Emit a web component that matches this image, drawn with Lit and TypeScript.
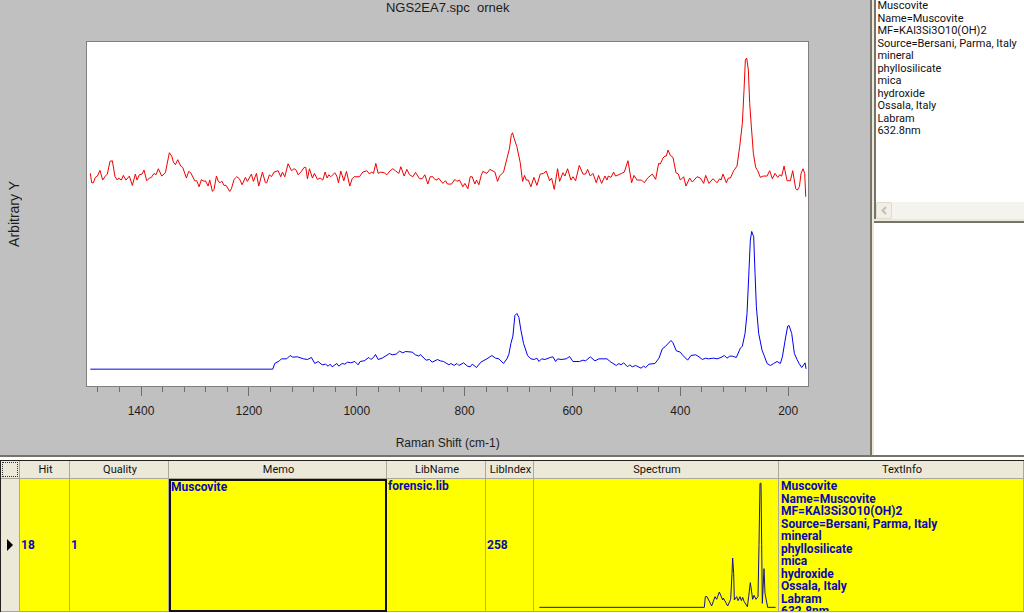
import { LitElement, html, svg, css } from "lit";
import { customElement } from "lit/decorators.js";

/** A run of samples: an origin in plot units, then x,y pairs in thirds of a unit. */
interface Run {
  origin: [number, number];
  samples: string;
}

const toPoints = (runs: Run[]): string =>
  runs
    .map(({ origin: [ox, oy], samples }) =>
      samples
        .trim()
        .split(/\s+/)
        .map((pair) => {
          const [x, y] = pair.split(",").map(Number);
          return `${(ox + x / 3).toFixed(2)},${(oy + y / 3).toFixed(2)}`;
        })
        .join(" ")
    )
    .join(" ");

const SAMPLE_TRACE: Run[] = [
  {
    origin: [80, 120],
    samples: `31,160 35,188 40,188 46,172 52,168 60,151 68,180 76,168 82,162 90,124 97,122 105,170 112,180 116,174
      124,180 130,166 138,180 148,168 157,196 166,162 171,180 178,164 186,162 192,150 200,182 208,174 214,172 222,160
      228,164 235,146 245,168 256,158 268,98 275,108 280,126 286,134 293,119 302,138 308,142 319,174 326,154 332,158
      344,182 350,182 357,200 364,179 372,184 376,182 384,198 389,180 397,214 402,208 409,168 415,184 420,188 425,183
      432,196 438,196 449,214 454,206 462,178 470,170 478,176 486,194 496,172 502,184 514,162 520,184 529,160 536,198
      547,156 556,188 560,188 568,164 574,170 582,156 594,152 602,170 607,156 614,170 624,131 634,152 642,146 648,150
      654,164 664,154 672,142 677,142 682,176 688,146 697,174 703,160 712,178`,
  },
  {
    origin: [320, 120],
    samples: `0,174 8,180 15,156 21,174 26,164 32,170 44,158 50,168 55,188 62,153 71,182 79,154 89,198 96,176 102,170
      118,170 128,156 140,152 148,162 154,156 160,160 167,130 174,160 182,156 192,158 200,164 210,152 218,146 226,152
      236,160 242,140 252,168 260,148 268,164 278,170 286,157 298,176 306,176 314,164 323,192 330,170 338,170 344,178
      350,180 355,174 368,190 376,182 382,192 394,192 404,178 410,184 418,180 428,200 434,190 443,206 450,170 456,170
      464,192 469,180 476,194 483,166 488,154 500,160 509,148 524,156 532,184 538,168 550,156 560,116 568,84 573,46
      577,38 582,56 590,80 600,128 607,184 613,166 618,180 624,180 632,200 641,172 650,196 660,162 670,160 678,153
      688,182 694,174 702,208 712,146 718,184`,
  },
  {
    origin: [560, 40],
    samples: `8,398 14,408 22,386 32,420 38,410 46,422 57,376 68,402 76,402 82,388 90,408 98,400 108,428 115,406
      124,430 134,408 140,420 144,408 152,412 160,396 166,408 184,400 192,396 203,362 214,428 221,406 230,420 244,420
      252,428 262,414 276,402 286,418 295,370 300,372 308,354 314,348 318,348 323,330 330,346 338,352 347,398 354,402
      360,420 370,410 377,438 388,414 396,426 410,410 420,414 430,430 436,406 446,430 458,416 470,428 478,416 482,420
      488,402 498,428 504,414 510,414 520,392 530,378 538,320 546,250 551,150 555,60 559,54 564,90 568,190 573,260
      579,340 586,382 592,392 600,412 608,408 620,408 628,392 636,416 644,400 652,412 658,404 664,408 671,378 680,422
      690,422 697,392 706,446 711,450 717,440 722,400 728,386 733,400 736,470`,
  },
];

const LIBRARY_TRACE: Run[] = [
  { origin: [0, 300], samples: "271,207 818,207" },
  {
    origin: [260, 300],
    samples: `44,190 58,182 64,176 80,176 90,166 98,171 112,170 130,176 142,178 154,172 164,190 174,184 186,194
      196,192 204,198 210,192 216,200 222,196 230,190 236,198 246,190 254,192 262,186 272,188 284,184 294,194 300,184
      312,182 326,172 332,178 340,172 346,163 354,178 366,174 388,160 396,164 408,162 418,153 428,158 436,154 456,156
      466,164 476,168 480,163 498,180 508,178 516,186 532,178 540,182 550,184 566,194 572,190 582,196 590,190 596,196
      610,188 622,198 630,200 636,192 649,202 662,186 680,176 695,166 706,174 716,176 730,190 740,176 746,162 752,130
      758,108 764,46 770,40 776,52 782,90 790,130 802,166 812,176 822,178 830,174 836,184 844,176 854,178`,
  },
  {
    origin: [540, 220],
    samples: `30,412 38,410 46,424 52,416 62,418 78,416 88,409 98,424 118,424 128,420 136,422 150,410 164,422 176,416
      200,416 212,426 228,436 236,430 242,434 250,428 262,440 268,434 276,440 286,436 302,444 310,438 316,442 326,432
      344,430 356,414 366,386 374,380 392,361 398,368 408,392 420,396 426,404 442,420 452,406 466,404 476,410 486,418
      496,414 504,416 520,414 530,416 542,412 552,406 560,414 568,408 576,408 588,412 600,384 606,378 614,340 620,280
      625,170 630,60 634,34 640,50 644,160 648,260 655,340 665,390 672,408 680,430 690,436 700,430 710,424 720,430
      726,410 736,350 742,318 746,316 754,340 762,400 770,418 776,430 784,442 790,434 794,428 797,446`,
  },
];

const THUMBNAIL_TRACE: Run[] = [
  {
    origin: [530, 440],
    samples: `28,502 523,502 526,470 531,470 545,498 555,470 560,478 568,456 578,480 580,474 593,498 602,478 606,400
      608,354 611,400 613,480 620,470 624,482 630,470 634,482 638,472 642,484 652,500 656,470 661,428 668,478 672,466
      678,478 684,470 687,314 690,130 693,130 695,314 697,490 702,386 705,460 713,502 737,502`,
  },
];

const INFO = [
  "Muscovite",
  "Name=Muscovite",
  "MF=KAl3Si3O10(OH)2",
  "Source=Bersani, Parma, Italy",
  "mineral",
  "phyllosilicate",
  "mica",
  "hydroxide",
  "Ossala, Italy",
  "Labram",
  "632.8nm",
];

@customElement("spectrum-chart")
export class SpectrumChart extends LitElement {
  static styles = css`
    :host {
      display: grid;
      grid-template: 41px minmax(0, 1fr) 48px 22px / 86px minmax(0, 1fr) 61px;
      background: #c0c0c0;
      color: #1c1c1c;
      font: 12px/16px "Liberation Sans", Arial, sans-serif;
      box-sizing: border-box;
    }
    .title {
      grid-area: 1 / 2;
      text-align: center;
      white-space: pre;
      font-size: 13px;
    }
    .y-label {
      grid-area: 2 / 1;
      writing-mode: vertical-rl;
      rotate: 180deg;
      justify-self: start;
      align-self: center;
      padding-right: 6px;
      font-size: 14px;
    }
    .plot {
      grid-area: 2 / 2;
      display: block;
      width: 100%;
      height: 100%;
      box-sizing: border-box;
      border: 1px solid #808080;
      background: #fff;
    }
    .trace {
      fill: none;
      vector-effect: non-scaling-stroke;
      stroke-width: 1px;
    }
    .sample {
      stroke: #f00000;
    }
    .library {
      stroke: #0000f0;
    }
    .axis {
      grid-area: 3 / 2;
      display: block;
      width: 100%;
      height: 100%;
      overflow: visible;
    }
    .tick {
      stroke: #6e6e6e;
      shape-rendering: crispEdges;
    }
    .value {
      fill: #1c1c1c;
      text-anchor: middle;
    }
    .x-label {
      grid-area: 4 / 2;
      text-align: center;
    }
  `;

  private position(shift: number): string {
    return `${((55 + (1400 - shift) * 0.539) / 7.23).toFixed(3)}%`;
  }

  render() {
    const ticks = Array.from({ length: 33 }, (_, i) => 1480 - i * 40);
    return html`
      <div class="title">NGS2EA7.spc  ornek</div>
      <div class="y-label">Arbitrary Y</div>
      <svg class="plot" viewBox="87 42 721 344" preserveAspectRatio="none" role="img" aria-label="Raman spectra">
        <polyline class="trace sample" points=${toPoints(SAMPLE_TRACE)} />
        <polyline class="trace library" points=${toPoints(LIBRARY_TRACE)} />
      </svg>
      <svg class="axis">
        ${ticks.map((shift) => {
          const x = this.position(shift);
          const major = shift % 200 === 0;
          return svg`
            <line class="tick" x1=${x} x2=${x} y1="0" y2=${major ? 9 : 5} />
            ${major ? svg`<text class="value" x=${x} y="28">${shift}</text>` : ""}`;
        })}
      </svg>
      <div class="x-label">Raman Shift (cm-1)</div>
    `;
  }
}

@customElement("info-panel")
export class InfoPanel extends LitElement {
  static styles = css`
    :host {
      display: grid;
      grid-template-rows: 219px minmax(0, 1fr);
      border-left: 2px solid #75736a;
      background: #ece9d8;
      font: 11px/11px Roboto, "Liberation Sans", sans-serif;
      color: #111;
      overflow: hidden;
    }
    .details {
      display: flex;
      flex-direction: column;
      justify-content: space-between;
      margin-left: 2px;
      border-left: 2px solid #75736a;
      background: #fff;
    }
    .lines {
      display: grid;
      grid-auto-rows: 1fr;
      height: 138px;
      margin: 0;
      padding: 0 0 0 1px;
      list-style: none;
      white-space: nowrap;
    }
    .scrollbar {
      display: flex;
      height: 17px;
      background: #f4f3ee;
    }
    .arrow {
      width: 16px;
      padding: 0;
      border: 1px solid #dedccf;
      border-radius: 2px;
      background: #f1efe6;
    }
    .glyph {
      display: block;
      margin: auto;
      fill: none;
      stroke: #c3c1b4;
      stroke-width: 2;
    }
    .empty {
      margin: 2px 0 2px 2px;
      border-top: 2px solid #75736a;
      background: #fff;
    }
  `;

  render() {
    return html`
      <div class="details">
        <ul class="lines">
          ${INFO.map((line) => html`<li>${line}</li>`)}
        </ul>
        <div class="scrollbar">
          <button class="arrow" aria-label="Scroll left" disabled>
            <svg class="glyph" width="8" height="9" viewBox="0 0 8 9"><path d="M6 1 2.500 4.500 6 8" /></svg>
          </button>
        </div>
      </div>
      <div class="empty"></div>
    `;
  }
}

@customElement("hit-table")
export class HitTable extends LitElement {
  static styles = css`
    :host {
      display: block;
      overflow: hidden;
      border-top: 2px solid #75736a;
      background: #fff;
      font: 11px/12px Roboto, "Liberation Sans", sans-serif;
      color: #111;
    }
    .grid {
      width: 100%;
      margin-top: 3px;
      border-collapse: separate;
      border-spacing: 0;
      table-layout: fixed;
      border-top: 1px solid #222;
      border-left: 1px solid #222;
    }
    .c-mark {
      width: 19px;
    }
    .c-hit {
      width: 50px;
    }
    .c-quality,
    .c-name {
      width: 99px;
    }
    .c-memo {
      width: 218px;
    }
    .c-index {
      width: 48px;
    }
    .c-spectrum {
      width: 245px;
    }
    th,
    td {
      box-sizing: border-box;
      padding: 0;
      border-right: 1px solid #aca899;
      border-bottom: 1px solid #aca899;
    }
    th {
      height: 18px;
      background: #ece9d8;
      font-weight: 400;
      text-align: center;
      padding-left: 2px;
    }
    .corner {
      padding: 1px;
    }
    .focus {
      height: 13px;
      border: 1px dotted #333;
    }
    td {
      height: 133px;
      background: #ff0;
      color: #0a0ab4;
      font-weight: 700;
      font-size: 12px;
      padding-left: 1px;
    }
    .marker {
      background: #ece9d8;
      padding-left: 6px;
    }
    .pointer {
      display: block;
      fill: #000;
    }
    .top {
      vertical-align: top;
      padding-top: 1px;
    }
    .selected {
      border: 2px solid #111;
      padding: 0;
    }
    .clip {
      display: grid;
      grid-auto-rows: 1fr;
      height: 138px;
      margin: 0;
      padding: 0 0 0 1px;
      list-style: none;
      white-space: nowrap;
    }
    .window {
      height: 131px;
      overflow: hidden;
    }
    .thumb {
      display: block;
      width: 100%;
      height: 131px;
    }
    .line {
      fill: none;
      stroke: #14148c;
      vector-effect: non-scaling-stroke;
    }
  `;

  render() {
    return html`
      <table class="grid">
        <colgroup>
          <col class="c-mark" />
          <col class="c-hit" />
          <col class="c-quality" />
          <col class="c-memo" />
          <col class="c-name" />
          <col class="c-index" />
          <col class="c-spectrum" />
          <col />
        </colgroup>
        <thead>
          <tr>
            <th class="corner" aria-label="Row marker"><div class="focus"></div></th>
            <th>Hit</th>
            <th>Quality</th>
            <th>Memo</th>
            <th>LibName</th>
            <th>LibIndex</th>
            <th>Spectrum</th>
            <th>TextInfo</th>
          </tr>
        </thead>
        <tbody>
          <tr>
            <td class="marker">
              <svg class="pointer" width="7" height="12" viewBox="0 0 7 12"><path d="M0 0 6 6 0 12z" /></svg>
            </td>
            <td>18</td>
            <td>1</td>
            <td class="top selected">Muscovite</td>
            <td class="top">forensic.lib</td>
            <td>258</td>
            <td class="top">
              <svg class="thumb" viewBox="535 480 243 131" preserveAspectRatio="none" role="img" aria-label="Spectrum">
                <polyline class="line" points=${toPoints(THUMBNAIL_TRACE)} />
              </svg>
            </td>
            <td class="top">
              <div class="window">
                <ul class="clip">
                  ${INFO.map((line) => html`<li>${line}</li>`)}
                </ul>
              </div>
            </td>
          </tr>
        </tbody>
      </table>
    `;
  }
}

@customElement("app-root")
export class AppRoot extends LitElement {
  static styles = css`
    :host {
      display: grid;
      grid-template-rows: minmax(0, 1fr) 158px;
      height: 100vh;
      overflow: hidden;
      background: #c0c0c0;
    }
    .upper {
      display: grid;
      grid-template-columns: minmax(0, 17fr) minmax(0, 3fr);
      min-height: 0;
    }
  `;

  render() {
    return html`
      <div class="upper">
        <spectrum-chart></spectrum-chart>
        <info-panel></info-panel>
      </div>
      <hit-table></hit-table>
    `;
  }
}
